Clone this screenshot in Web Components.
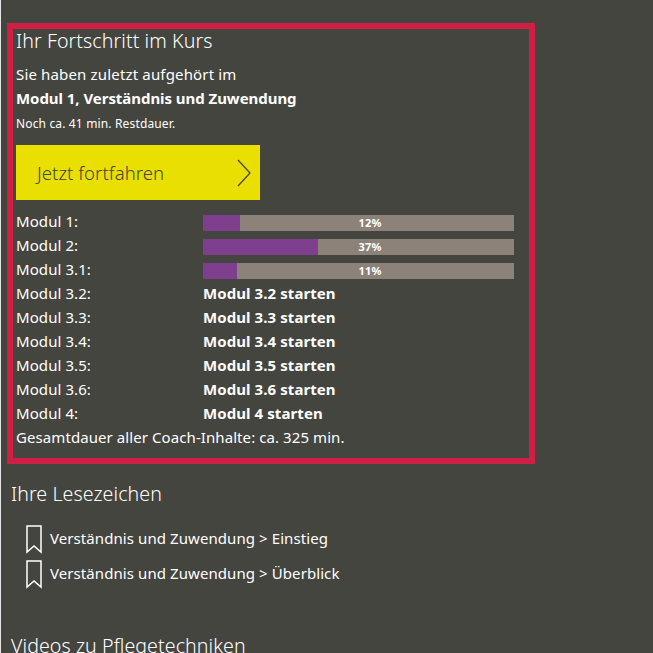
<!DOCTYPE html>
<html lang="de">
<head>
<meta charset="utf-8">
<title>Kurs</title>
<style>
  html, body { margin: 0; height: 100%; overflow: hidden; background: #45453f; }
  body {
    border-left: 1px solid #e6e6e6;
    box-sizing: border-box;
    color: #fff;
    font: 15px/24px "Noto Sans", sans-serif;
    letter-spacing: .08px;
  }
</style>
</head>
<body>
<template id="progress-bar-tpl">
  <style>
    :host { display: block; position: relative; width: 311px; height: 16px; margin-top: 4px; background: #8d8279; }
    .fill { height: 100%; background: #7f3f8f; }
    /* the label starts at the middle of the bar, it is not centred on it */
    .label {
      position: absolute; top: 0; left: 50%;
      font-size: 11px; font-weight: 700; line-height: 16px; color: #fff;
      letter-spacing: .2px;
    }
  </style>
  <div class="fill"></div>
  <div class="label"></div>
</template>

<template id="module-row-tpl">
  <style>
    :host { display: grid; grid-template-columns: 187px 311px; align-items: center; height: 24px; font-size: 15px; }
    .start { font-weight: 700; }
  </style>
  <div class="name"></div>
  <div class="start"><slot></slot></div>
</template>

<template id="continue-button-tpl">
  <style>
    :host {
      display: flex; align-items: center; justify-content: space-between;
      width: 244px; height: 55px; box-sizing: border-box; padding: 0 9px 0 21px;
      background: #e9df00; color: #45453f; font-size: 18.5px; font-weight: 300;
    }
    svg { display: block; width: 14px; height: 28px; }
  </style>
  <slot></slot>
  <svg viewBox="0 0 14 28" fill="none" stroke="#45453f" stroke-width="1.3"><path d="M1 1l12 13L1 27"/></svg>
</template>

<template id="progress-panel-tpl">
  <style>
    :host {
      display: block; width: 528px; height: 441px; box-sizing: border-box;
      margin: 23px 0 0 6px; padding: 0 0 0 3px;
      border: 6px solid #d01f45;
    }
    h2 { margin: 0; font-size: 19.6px; font-weight: 300; line-height: 24px; }
    p { margin: 0; height: 24px; }
    .intro { margin-top: 9px; letter-spacing: .16px; }
    .small { margin-top: 2px; font-size: 12px; letter-spacing: .15px; }
    b { font-weight: 700; letter-spacing: -.05px; }
    continue-button { margin: 9px 0 9px; }
  </style>
  <h2>Ihr Fortschritt im Kurs</h2>
  <p class="intro">Sie haben zuletzt aufgehört im</p>
  <p><b>Modul 1, Verständnis und Zuwendung</b></p>
  <p class="small">Noch ca. 41 min. Restdauer.</p>
  <continue-button>Jetzt fortfahren</continue-button>
  <slot></slot>
</template>

<template id="bookmark-item-tpl">
  <style>
    :host { display: flex; align-items: center; gap: 8px; height: 35px; padding-left: 15px; font-size: 15px; }
    svg { display: block; width: 16px; height: 29px; flex: none; }
    span { padding-bottom: 4px; }
  </style>
  <svg viewBox="0 0 16 29" fill="none" stroke="#fff" stroke-width="1.5"><path d="M1 1h14v26l-7-6-7 6z"/></svg>
  <span><slot></slot></span>
</template>

<template id="page-section-tpl">
  <style>
    :host { display: block; padding-left: 10px; }
    h2 { margin: 0; font-size: 19.6px; font-weight: 300; line-height: 24px; }
  </style>
  <h2></h2>
  <slot></slot>
</template>

<progress-panel>
  <module-row name="Modul 1:"><progress-bar value="12"></progress-bar></module-row>
  <module-row name="Modul 2:"><progress-bar value="37"></progress-bar></module-row>
  <module-row name="Modul 3.1:"><progress-bar value="11"></progress-bar></module-row>
  <module-row name="Modul 3.2:">Modul 3.2 starten</module-row>
  <module-row name="Modul 3.3:">Modul 3.3 starten</module-row>
  <module-row name="Modul 3.4:">Modul 3.4 starten</module-row>
  <module-row name="Modul 3.5:">Modul 3.5 starten</module-row>
  <module-row name="Modul 3.6:">Modul 3.6 starten</module-row>
  <module-row name="Modul 4:">Modul 4 starten</module-row>
  <div>Gesamtdauer aller Coach-Inhalte: ca. 325 min.</div>
</progress-panel>

<page-section title="Ihre Lesezeichen" style="margin-top:18px">
  <div style="height:16px"></div>
  <bookmark-item>Verständnis und Zuwendung &gt; Einstieg</bookmark-item>
  <bookmark-item>Verständnis und Zuwendung &gt; Überblick</bookmark-item>
</page-section>

<page-section title="Videos zu Pflegetechniken" style="margin-top:42px"></page-section>

<script>
  // every element just clones its template into an open shadow root
  function fromTemplate(id) {
    return class extends HTMLElement {
      constructor() {
        super();
        this.attachShadow({mode: 'open'}).appendChild(document.getElementById(id).content.cloneNode(true));
      }
    };
  }

  customElements.define('continue-button', fromTemplate('continue-button-tpl'));
  customElements.define('progress-panel', fromTemplate('progress-panel-tpl'));
  customElements.define('bookmark-item', fromTemplate('bookmark-item-tpl'));

  customElements.define('progress-bar', class extends fromTemplate('progress-bar-tpl') {
    connectedCallback() {
      const value = this.getAttribute('value');
      this.shadowRoot.querySelector('.fill').style.width = `${value}%`;
      this.shadowRoot.querySelector('.label').textContent = `${value}%`;
    }
  });

  customElements.define('module-row', class extends fromTemplate('module-row-tpl') {
    connectedCallback() {
      this.shadowRoot.querySelector('.name').textContent = this.getAttribute('name');
    }
  });

  customElements.define('page-section', class extends fromTemplate('page-section-tpl') {
    connectedCallback() {
      this.shadowRoot.querySelector('h2').textContent = this.getAttribute('title');
    }
  });
</script>
</body>
</html>
